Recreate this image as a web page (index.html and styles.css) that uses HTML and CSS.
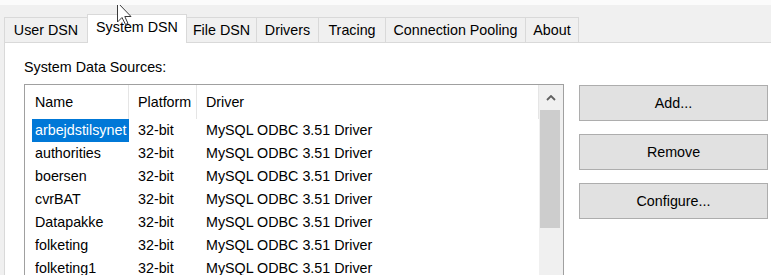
FILE: index.html
```html
<!DOCTYPE html>
<html lang="en">
<head>
    <meta charset="UTF-8">
    <title>ODBC Data Source Administrator</title>
    <link rel="stylesheet" href="styles.css">
</head>
<body>
    <div class="dialog">
        <!-- Tab strip -->
        <div class="tabs">
            <div class="tab tab-user">User DSN</div>
            <div class="tab tab-system active">System DSN</div>
            <div class="tab tab-file">File DSN</div>
            <div class="tab tab-drivers">Drivers</div>
            <div class="tab tab-tracing">Tracing</div>
            <div class="tab tab-pooling">Connection Pooling</div>
            <div class="tab tab-about">About</div>
        </div>

        <div class="panel">
            <div class="panel-label">System Data Sources:</div>

            <div class="listbox">
                <div class="list-main">
                    <div class="list-header">
                        <div class="col-head col-name">Name</div>
                        <div class="col-head">Platform</div>
                        <div class="col-head">Driver</div>
                    </div>
                    <div class="list-row selected">
                        <div class="cell cell-name"><span>arbejdstilsynet</span></div>
                        <div class="cell">32-bit</div>
                        <div class="cell">MySQL ODBC 3.51 Driver</div>
                    </div>
                    <div class="list-row">
                        <div class="cell cell-name"><span>authorities</span></div>
                        <div class="cell">32-bit</div>
                        <div class="cell">MySQL ODBC 3.51 Driver</div>
                    </div>
                    <div class="list-row">
                        <div class="cell cell-name"><span>boersen</span></div>
                        <div class="cell">32-bit</div>
                        <div class="cell">MySQL ODBC 3.51 Driver</div>
                    </div>
                    <div class="list-row">
                        <div class="cell cell-name"><span>cvrBAT</span></div>
                        <div class="cell">32-bit</div>
                        <div class="cell">MySQL ODBC 3.51 Driver</div>
                    </div>
                    <div class="list-row">
                        <div class="cell cell-name"><span>Datapakke</span></div>
                        <div class="cell">32-bit</div>
                        <div class="cell">MySQL ODBC 3.51 Driver</div>
                    </div>
                    <div class="list-row">
                        <div class="cell cell-name"><span>folketing</span></div>
                        <div class="cell">32-bit</div>
                        <div class="cell">MySQL ODBC 3.51 Driver</div>
                    </div>
                    <div class="list-row">
                        <div class="cell cell-name"><span>folketing1</span></div>
                        <div class="cell">32-bit</div>
                        <div class="cell">MySQL ODBC 3.51 Driver</div>
                    </div>
                </div>
                <div class="scrollbar">
                    <div class="scroll-up">
                        <svg width="10" height="6" viewBox="0 0 10 6">
                            <path d="M1 5 L5 1 L9 5" fill="none" stroke="#606060" stroke-width="1.8"/>
                        </svg>
                    </div>
                    <div class="scroll-thumb"></div>
                </div>
            </div>

            <div class="buttons">
                <button class="btn">Add...</button>
                <button class="btn">Remove</button>
                <button class="btn">Configure...</button>
            </div>
        </div>

        <!-- mouse pointer over the tab strip -->
        <svg class="cursor" width="18" height="24" viewBox="0 0 18 24">
            <path d="M1.5 0.5 L1.5 20 L6 15.5 L9.5 22.5 L12 21.5 L8.8 14.5 L15 14.5 Z" fill="#fff" stroke="#3a3a3a" stroke-width="1"/>
        </svg>
    </div>
</body>
</html>
```

FILE: styles.css
```css
body {
    margin: 0;
    font-family: "Liberation Sans", Arial, sans-serif;
    font-size: 14.3px;
    color: #000;
    background-color: #fff;
}

.dialog {
    position: relative;
    height: 100vh;
    overflow: hidden;
    background-color: #f0f0f0;
    border-top: 5px solid #fbfbfb;
    padding-left: 4px;
    box-sizing: border-box;
}

/* Tab strip */
.tabs {
    display: flex;
    align-items: flex-end;
    height: 37px;
}

.tab {
    height: 25px;
    line-height: 25px;
    text-align: center;
    border: 1px solid #d9d9d9;
    border-bottom: none;
    margin-right: -1px;
    box-sizing: border-box;
    background-color: #f0f0f0;
    white-space: nowrap;
}

.tab-user { width: 84px; }
.tab-system { width: 100px; }
.tab-file { width: 71px; }
.tab-drivers { width: 63px; }
.tab-tracing { width: 68px; }
.tab-pooling { width: 141px; }
.tab-about { width: 54px; }

.tab.active {
    position: relative;
    z-index: 1;
    height: 29px;
    line-height: 24px;
    margin-bottom: -1px;
    background-color: #fff;
}

/* Panel body */
.panel {
    display: grid;
    grid-template-columns: 540px 189px;
    grid-template-rows: 17px auto;
    column-gap: 15px;
    row-gap: 8px;
    padding: 16px 0 0 19px;
    background-color: #fff;
    border-top: 1px solid #d9d9d9;
    border-left: 1px solid #d9d9d9;
    height: 100%;
    box-sizing: border-box;
}

.panel-label {
    grid-column: 1;
    line-height: 17px;
}

.listbox {
    grid-column: 1;
    grid-row: 2;
    display: flex;
    height: 220px;
    border: 1px solid #a0a0a0;
}

.list-main {
    flex-grow: 1;
}

.list-header,
.list-row {
    display: grid;
    grid-template-columns: 104px 68px 1fr;
}

.list-header {
    height: 34px;
}

.col-head {
    line-height: 34px;
    padding-left: 9px;
    border-right: 1px solid #e5e5e5;
    margin: 0 0 2px;
    box-sizing: border-box;
}

.col-head.col-name {
    padding-left: 10px;
}

.list-row {
    height: 23px;
    line-height: 23px;
}

.cell {
    padding-left: 9px;
    white-space: nowrap;
}

.cell.cell-name {
    padding-left: 7px;
}

.cell-name span {
    display: block;
    padding-left: 3px;
}

.list-row.selected .cell-name span {
    background-color: #0078d7;
    color: #fff;
}

/* Scrollbar */
.scrollbar {
    width: 24px;
    background-color: #f0f0f0;
}

.scroll-up {
    height: 25px;
    display: flex;
    justify-content: center;
    align-items: center;
}

.scroll-thumb {
    height: 118px;
    margin: 0 3px 0 1px;
    background-color: #cdcdcd;
}

/* Buttons */
.buttons {
    grid-column: 2;
    grid-row: 2;
    display: flex;
    flex-direction: column;
    gap: 13px;
    padding-top: 1px;
}

.btn {
    height: 36px;
    font-family: inherit;
    font-size: 14.3px;
    color: #000;
    background-color: #e1e1e1;
    border: 1px solid #adadad;
}

.cursor {
    position: absolute;
    z-index: 2;
    top: -3px;
    left: 116px;
}
```
